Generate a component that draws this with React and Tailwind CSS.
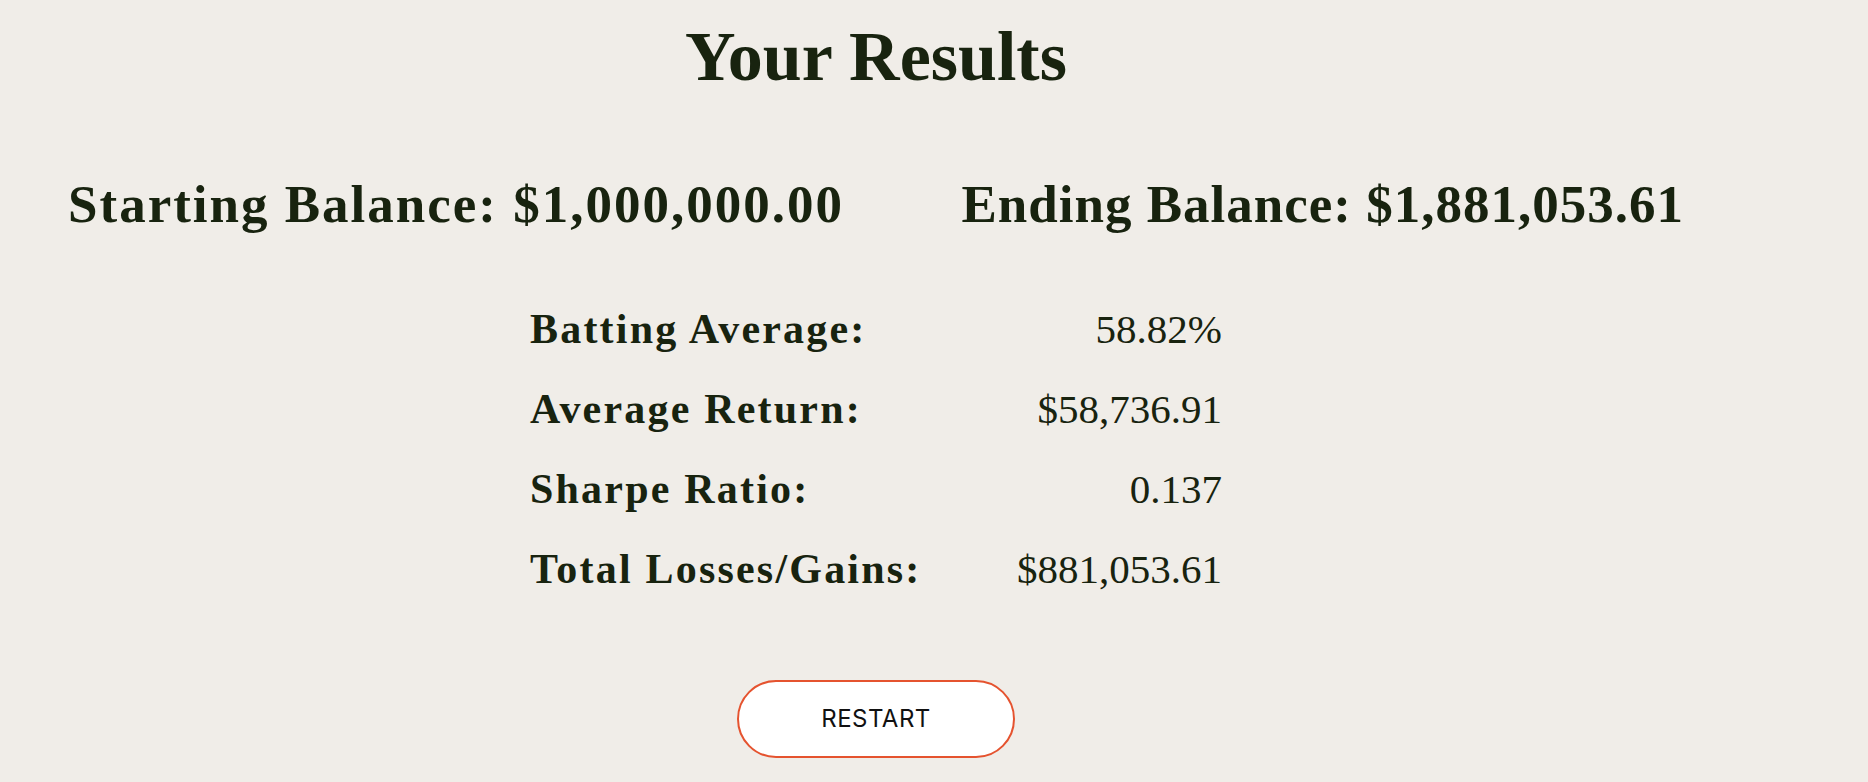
import React from 'react';

const stats = [
    { label: 'Batting Average:', value: '58.82%' },
    { label: 'Average Return:', value: '$58,736.91' },
    { label: 'Sharpe Ratio:', value: '0.137' },
    { label: 'Total Losses/Gains:', value: '$881,053.61' },
];

const serif = "font-['Liberation_Serif','Times_New_Roman',serif]";

export default function App() {
    return (
        <div className={`min-h-screen bg-[#f0ede8] text-[#18230f] ${serif}`}>
            <div className="ml-[68px] w-[1616px] flex flex-col items-center pt-[22px] pb-10">
                {/* title */}
                <h1 className="text-[70px] leading-[70px] font-bold">Your Results</h1>

                {/* balances */}
                <div className="w-full flex justify-between mt-[86px] text-[53px] leading-[53px] font-bold">
                    <p className="tracking-[2px]">Starting Balance: $1,000,000.00</p>
                    <p className="tracking-[1px]">Ending Balance: $1,881,053.61</p>
                </div>

                {/* stats */}
                <div className="mt-[58px] w-[692px] flex flex-col">
                    {stats.map(s => (
                        <div key={s.label} className="h-[80px] flex items-baseline justify-between leading-[80px]">
                            <span className="text-[42px] font-bold tracking-[2.2px]">{s.label}</span>
                            <span className="text-[41px]">{s.value}</span>
                        </div>
                    ))}
                </div>

                <button className="mt-[71px] w-[278px] h-[78px] rounded-full border-2 border-[#e5532f] bg-white text-[#111] font-['Inter',sans-serif] text-[24px] tracking-[0.02em] flex items-center justify-center">
                    RESTART
                </button>
            </div>
        </div>
    );
}
